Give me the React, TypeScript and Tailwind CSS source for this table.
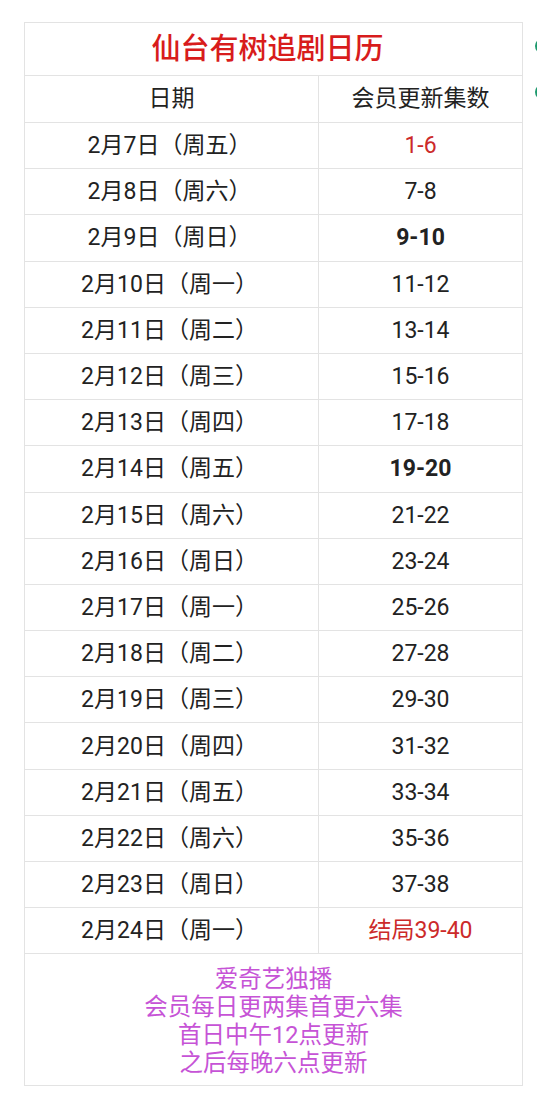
import React from "react";

const rows: { date: string; ep: string; tone?: "red" | "bold" }[] = [
  { date: "2月7日（周五）", ep: "1-6", tone: "red" },
  { date: "2月8日（周六）", ep: "7-8" },
  { date: "2月9日（周日）", ep: "9-10", tone: "bold" },
  { date: "2月10日（周一）", ep: "11-12" },
  { date: "2月11日（周二）", ep: "13-14" },
  { date: "2月12日（周三）", ep: "15-16" },
  { date: "2月13日（周四）", ep: "17-18" },
  { date: "2月14日（周五）", ep: "19-20", tone: "bold" },
  { date: "2月15日（周六）", ep: "21-22" },
  { date: "2月16日（周日）", ep: "23-24" },
  { date: "2月17日（周一）", ep: "25-26" },
  { date: "2月18日（周二）", ep: "27-28" },
  { date: "2月19日（周三）", ep: "29-30" },
  { date: "2月20日（周四）", ep: "31-32" },
  { date: "2月21日（周五）", ep: "33-34" },
  { date: "2月22日（周六）", ep: "35-36" },
  { date: "2月23日（周日）", ep: "37-38" },
  { date: "2月24日（周一）", ep: "结局39-40", tone: "red" },
];

export default function App() {
  return (
    <div
      className="relative w-[537px] h-[1093px] bg-white overflow-hidden pt-[22px] pl-[24px]"
      style={{ fontFamily: "Roboto, 'Noto Sans CJK SC', sans-serif" }}
    >
      <table className="w-[499px] border-collapse text-[#222] text-[23px] leading-[28px] text-center">
        <tbody>
          <tr className="h-[53px]">
            <td colSpan={2} className="border border-[#e3e3e3] text-[29px] font-medium text-[#d81c1c] pr-[12px]">
              仙台有树追剧日历
            </td>
          </tr>
          <tr className="h-[47px]">
            <td className="w-[294px] border border-[#e3e3e3]">日期</td>
            <td className="border border-[#e3e3e3]">会员更新集数</td>
          </tr>
          {rows.map((r) => (
            <tr key={r.date} className="h-[46.2px]">
              <td className="border border-[#e3e3e3] pr-[4px] pt-[1px]">{r.date}</td>
              <td
                className={`border border-[#e3e3e3] pt-[1px] ${
                  r.tone === "red" ? "text-[#cc2a2a]" : r.tone === "bold" ? "font-bold" : ""
                }`}
              >
                {r.ep}
              </td>
            </tr>
          ))}
          <tr className="h-[132px]">
            <td colSpan={2} className="border border-[#e3e3e3] text-[23.5px] leading-[28px] text-[#c653d6] pt-[2px]">
              <div>爱奇艺独播</div>
              <div>会员每日更两集首更六集</div>
              <div>首日中午12点更新</div>
              <div>之后每晚六点更新</div>
            </td>
          </tr>
        </tbody>
      </table>
      <div className="absolute left-[535px] top-[38px] w-[16px] h-[16px] rounded-full bg-[#1f9a6e]" />
      <div className="absolute left-[535px] top-[84px] w-[16px] h-[16px] rounded-full bg-[#1f9a6e]" />
    </div>
  );
}
